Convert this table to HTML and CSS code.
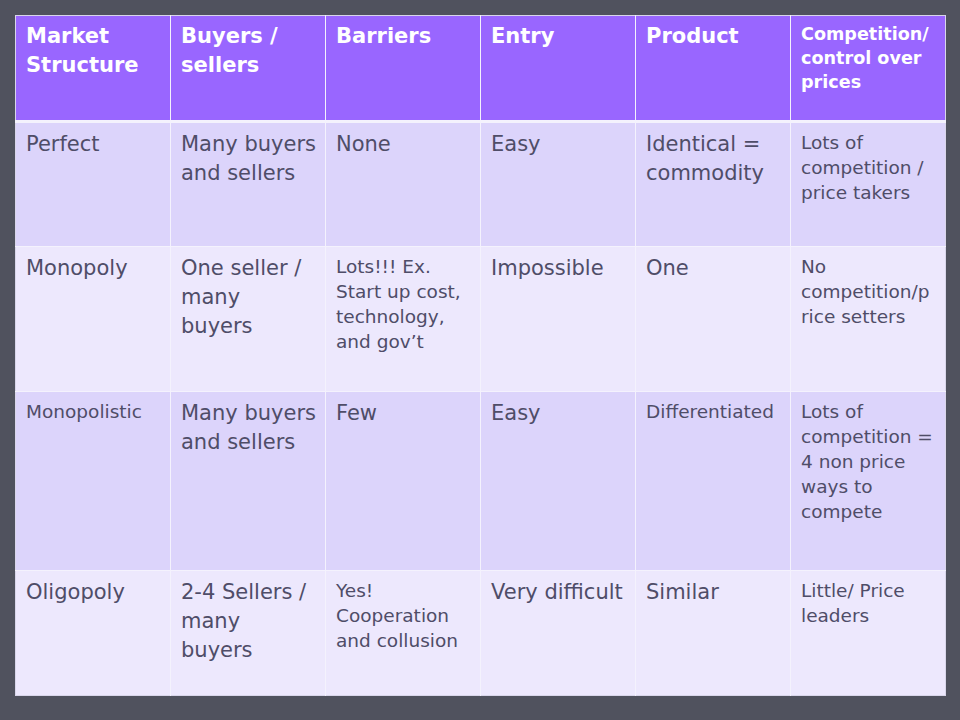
FILE: index.html
```html
<!DOCTYPE html>
<html>
<head>
<meta charset="utf-8">
<link rel="stylesheet" href="styles.css">
</head>
<body>
<table class="grid">
  <colgroup>
    <col class="c"><col class="c"><col class="c"><col class="c"><col class="c"><col class="c">
  </colgroup>
  <tr class="head">
    <th>Market<br>Structure</th>
    <th>Buyers /<br>sellers</th>
    <th>Barriers</th>
    <th>Entry</th>
    <th>Product</th>
    <th class="sm">Competition/<br>control over<br>prices</th>
  </tr>
  <tr class="odd r1">
    <td>Perfect</td>
    <td>Many buyers<br>and sellers</td>
    <td>None</td>
    <td>Easy</td>
    <td>Identical =<br>commodity</td>
    <td class="sm">Lots of<br>competition /<br>price takers</td>
  </tr>
  <tr class="even r2">
    <td>Monopoly</td>
    <td>One seller /<br>many<br>buyers</td>
    <td class="sm">Lots!!! Ex.<br>Start up cost,<br>technology,<br>and gov’t</td>
    <td>Impossible</td>
    <td>One</td>
    <td class="sm">No<br>competition/p<br>rice setters</td>
  </tr>
  <tr class="odd r3">
    <td class="sm">Monopolistic</td>
    <td>Many buyers<br>and sellers</td>
    <td>Few</td>
    <td>Easy</td>
    <td class="sm">Differentiated</td>
    <td class="sm">Lots of<br>competition =<br>4 non price<br>ways to<br>compete</td>
  </tr>
  <tr class="even r4">
    <td>Oligopoly</td>
    <td>2-4 Sellers /<br>many<br>buyers</td>
    <td class="sm">Yes!<br>Cooperation<br>and collusion</td>
    <td>Very difficult</td>
    <td>Similar</td>
    <td class="sm">Little/ Price<br>leaders</td>
  </tr>
</table>
</body>
</html>
```

FILE: styles.css
```css
html, body {
  margin: 0;
  padding: 0;
  background: #50525e;
  width: 960px;
  height: 720px;
  overflow: hidden;
}

body {
  padding: 15px 0 0 15px;
  box-sizing: border-box;
  font-family: "DejaVu Sans", sans-serif;
}

.grid {
  border-collapse: collapse;
  table-layout: fixed;
  width: 930px;
  border: 1px solid #d9d6ea;
}

.c {
  width: 155px;
}

.grid th,
.grid td {
  vertical-align: top;
  text-align: left;
  white-space: nowrap;
  border-left: 1px solid #f4f2fd;
  padding: 7px 4px 0 10px;
  font-size: 21px;
  line-height: 29px;
  color: #4f4d68;
  font-weight: normal;
}

.grid td:first-child,
.grid th:first-child {
  border-left: 0;
}

.head th {
  background: #9966ff;
  color: #ffffff;
  font-weight: bold;
  font-size: 21px;
  padding-top: 6px;
}

.head th.sm {
  font-size: 17.6px;
  line-height: 24px;
  padding-top: 6px;
}

.head {
  height: 106px;
  border-bottom: 3px solid #f4f2fd;
}

.odd td {
  background: #dcd4fb;
}

.even td {
  background: #ede8fd;
}

.r1, .r2, .r3 {
  border-bottom: 1px solid #f4f2fd;
}

.r1 { height: 125px; }
.r2 { height: 145px; }
.r3 { height: 179px; }
.r4 { height: 125px; }

.grid td.sm {
  font-size: 18.5px;
  line-height: 25px;
  padding-top: 7px;
}
```
